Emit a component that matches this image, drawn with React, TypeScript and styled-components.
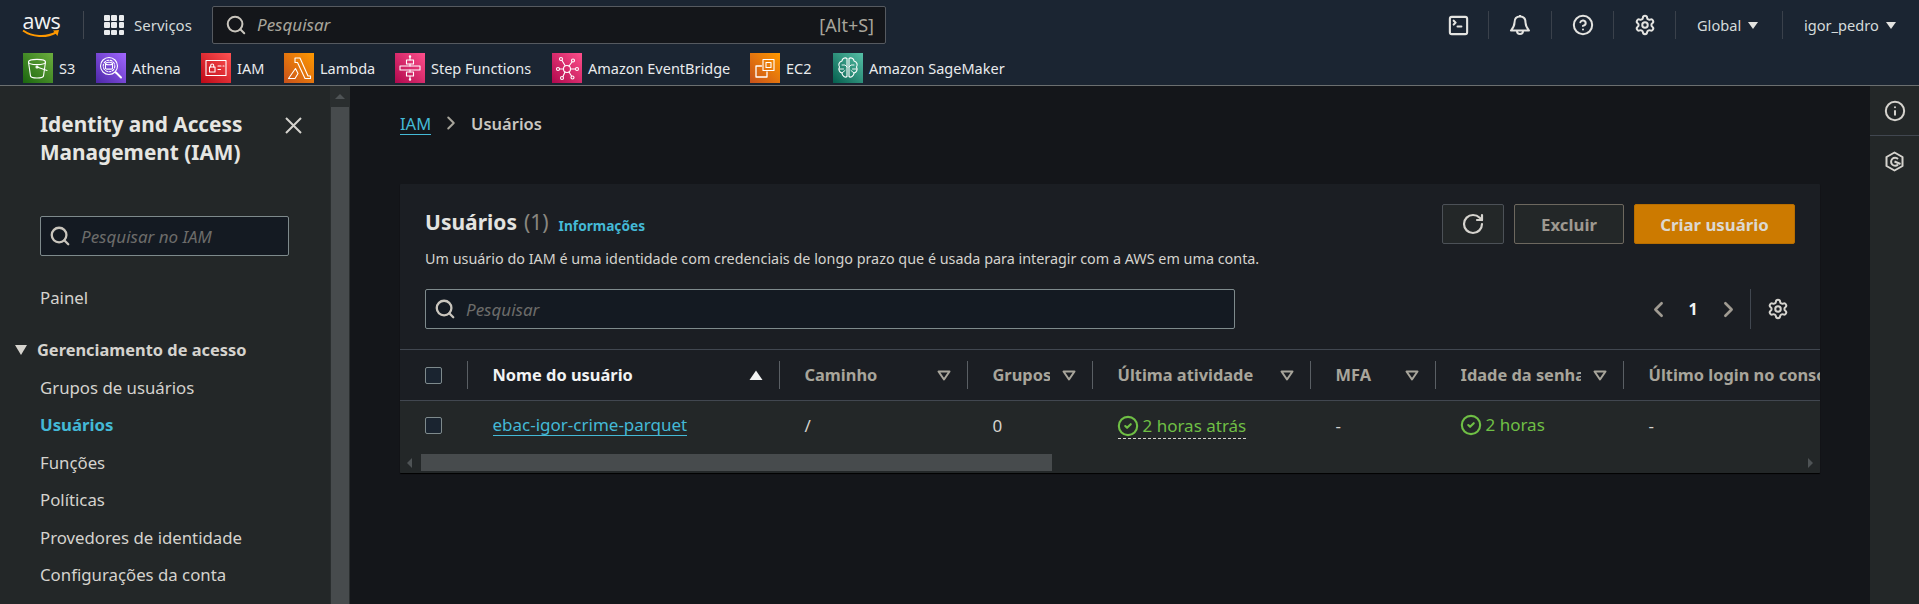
import React from "react";
import styled, { createGlobalStyle } from "styled-components";
import { Search, RotateCw, Settings, ChevronLeft, ChevronRight, CircleHelp, Info, SquareTerminal, CircleCheck } from "lucide-react";

const Global = createGlobalStyle`
  html, body { margin: 0; padding: 0; background: #14161a; }
  * { box-sizing: border-box; }
  svg { flex: none; }
  body { font-family: "Noto Sans", "Liberation Sans", sans-serif; font-size: 14px; color: #d5dbdb; }
`;

const Page = styled.div`
  width: 1919px; height: 604px; overflow: hidden; display: flex; flex-direction: column; background: #14161a;
`;
const Header = styled.header`
  height: 86px; flex: none; background: #1b2532; border-bottom: 1px solid #6b6f70; display: flex; flex-direction: column;
`;
const TopRow = styled.div`
  height: 50px; display: flex; align-items: center; padding-left: 22px;
`;
const LogoBox = styled.div`
  width: 39px; height: 26px; position: relative; flex: none; margin-top: -1px;
`;
const LogoText = styled.span`
  display: block; font-family: "Open Sans", sans-serif; font-size: 21.5px; line-height: 17px; letter-spacing: -0.3px; color: #f2f3f3; text-align: center;
`;
const LogoSmile = styled.svg`
  display: block; width: 39px; height: 10px;
`;
const TopDivider = styled.div<{ $ml: number }>`
  width: 1px; height: 28px; background: #414750; flex: none; margin-left: ${p => p.$ml}px;
`;
const ServicesBtn = styled.div`
  display: flex; align-items: center; gap: 10px; margin-left: 20px; color: #d5dbdb; font-size: 15px; width: 108px; flex: none;
`;
const GridIcon = styled.div`
  display: grid; grid-template-columns: repeat(3, 5.5px); grid-auto-rows: 5.5px; gap: 1.75px; flex: none;
  span { background: #e9ebed; border-radius: 1px; }
`;
const GlobalSearch = styled.div`
  width: 674px; height: 38px; flex: none; margin-top: -1px; background: #14161a; border: 1px solid #565a60; border-radius: 2px; display: flex; align-items: center; padding: 0 11px 0 12px; color: #c9c5bd;
`;
const GlobalPlaceholder = styled.span`
  font-style: italic; font-size: 17px; margin-left: 10px; color: #a8a59b; flex: 1;
`;
const Shortcut = styled.span`
  font-size: 18px; color: #a8a59b;
`;
const TopRight = styled.div`
  margin-left: auto; display: flex; align-items: center; height: 100%; color: #e3e3e0;
`;
const TopIcon = styled.div<{ $w: number }>`
  width: ${p => p.$w}px; display: flex; justify-content: center; flex: none;
`;
const BellIcon = styled.svg`
  width: 22px; height: 22px; display: block;
`;
const Thin = styled.div`
  width: 1px; height: 28px; background: #3a414b; flex: none;
`;
const Menu = styled.div<{ $w: number; $pl: number }>`
  width: ${p => p.$w}px; padding-left: ${p => p.$pl}px; display: flex; align-items: center; gap: 7px; font-size: 14.6px; color: #d5dbdb; flex: none;
`;
const Caret = styled.i`
  width: 0; height: 0; border-left: 5px solid transparent; border-right: 5px solid transparent; border-top: 7px solid #e3e3e0; display: block;
`;
const FavRow = styled.div`
  height: 35px; display: flex; align-items: flex-start; padding: 3px 0 0 23px;
`;
const Fav = styled.div<{ $w: number }>`
  width: ${p => p.$w}px; display: flex; align-items: center; gap: 6px; font-size: 14.5px; color: #e9ebed; flex: none; height: 30px; white-space: nowrap;
`;
const FavIcon = styled.svg`
  width: 30px; height: 30px; flex: none; display: block;
`;

const Body = styled.div`
  flex: 1; display: flex; min-height: 0;
`;
const Sidebar = styled.aside`
  width: 350px; flex: none; display: flex; background: #232728;
`;
const SideContent = styled.div`
  width: 330px; flex: none; padding: 24px 0 0 40px;
`;
const SideTitleRow = styled.div`
  display: flex; justify-content: space-between; align-items: flex-start; padding-right: 28px;
`;
const SideTitle = styled.h2`
  margin: 0; font-size: 20.8px; line-height: 28px; font-weight: 700; color: #e6e6e2; width: 230px;
`;
const CloseIcon = styled.svg`
  width: 17px; height: 17px; margin-top: 7px; flex: none; display: block;
`;
const SideSearch = styled.div`
  width: 249px; height: 40px; margin-top: 50px; background: #141a22; border: 1px solid #7e8a8c; border-radius: 2px; display: flex; align-items: center; padding-left: 8px; color: #c9c5bd;
`;
const SidePlaceholder = styled.span`
  font-style: italic; font-size: 17px; color: #6c6c6a; margin-left: 10px;
`;
const NavList = styled.nav`
  margin-top: 23px;
`;
const NavItem = styled.div<{ $active?: boolean }>`
  height: 37.5px; line-height: 37.5px; font-size: 16.8px; font-weight: ${p => (p.$active ? 700 : 400)}; color: ${p => (p.$active ? "#44b9d6" : "#d5d3ce")}; white-space: nowrap;
`;
const NavGroup = styled.div`
  height: 37.5px; margin: 14.5px 0 0 -25px; display: flex; align-items: center; gap: 10px; font-size: 16.4px; font-weight: 700; color: #d5d3ce; white-space: nowrap;
`;
const GroupCaret = styled.i`
  display: block; width: 0; height: 0; border-left: 6px solid transparent; border-right: 6px solid transparent; border-top: 10px solid #d5d3ce;
`;
const SideScroll = styled.div`
  width: 20px; flex: none; background: #2a2e2f; display: flex; flex-direction: column; align-items: center; padding-top: 8px;
`;
const UpArrow = styled.i`
  display: block; width: 0; height: 0; border-left: 5px solid transparent; border-right: 5px solid transparent; border-bottom: 5px solid #4e5355; flex: none;
`;
const SideThumb = styled.div`
  width: 18px; flex: 1; margin-top: 8px; background: #474b4d;
`;

const Main = styled.main`
  flex: 1; padding: 24px 50px 0; min-width: 0;
`;
const Crumbs = styled.div`
  height: 28px; display: flex; align-items: center; font-size: 16.5px; color: #d5dbdb; padding-bottom: 2px;
`;
const CrumbLink = styled.a`
  color: #44b9d6; border-bottom: 1px solid #44b9d6; line-height: 20px; margin-top: 3px;
`;
const CrumbSep = styled.span`
  display: flex; margin: 0 9px 0 9px; color: #a8a59b;
`;
const CrumbNow = styled.span`
  font-weight: 600; color: #c9c7c1;
`;
const Card = styled.section`
  margin-top: 46px; height: 289px; background: #1b1e23; border-radius: 1px; box-shadow: 0 1px 1px #000; overflow: hidden;
`;
const CardHead = styled.div`
  display: flex; justify-content: space-between; padding: 20px 25px 0;
`;
const TitleLine = styled.div`
  display: flex; align-items: center; height: 38px; padding-bottom: 2px;
`;
const Title = styled.h1`
  margin: 0; font-size: 21px; font-weight: 700; color: #e3e3e0;
`;
const Count = styled.span`
  font-weight: 400; color: #8a8780; margin-left: 7px;
`;
const InfoLink = styled.a`
  color: #44b9d6; font-weight: 700; font-size: 13.7px; margin-left: 10px; margin-top: 6px;
`;
const Desc = styled.p`
  margin: 7px 0 0; font-size: 14.36px; line-height: 20px; color: #d5d3ce; white-space: nowrap;
`;
const Actions = styled.div`
  display: flex; gap: 10px;
`;
const Btn = styled.button<{ $w: number; $kind: "icon" | "off" | "primary" }>`
  width: ${p => p.$w}px; height: 40px; border-radius: 2px; font: 700 16.8px "Noto Sans", sans-serif; display: flex; align-items: center; justify-content: center; padding: 0;
  background: ${p => (p.$kind === "primary" ? "#cc7a00" : "#232728")};
  color: ${p => (p.$kind === "primary" ? "#dcd8d0" : p.$kind === "off" ? "#9e9990" : "#d5d3ce")};
  border: 1px solid ${p => (p.$kind === "primary" ? "#b86e00" : p.$kind === "off" ? "#6d685f" : "#4c5157")};
`;
const FilterRow = styled.div`
  display: flex; justify-content: space-between; align-items: center; padding: 0 25px; margin-top: 20px;
`;
const FilterBox = styled.div`
  width: 810px; height: 40px; background: #141a22; border: 1px solid #7e8a8c; border-radius: 2px; display: flex; align-items: center; padding-left: 8px; color: #c9c5bd;
`;
const Pager = styled.div`
  display: flex; align-items: center; height: 40px; padding-right: 6px;
`;
const PageArrow = styled.div`
  width: 20px; display: flex; justify-content: center; color: #a09b92;
`;
const PageNum = styled.div`
  width: 20px; margin: 0 15px 0 15px; text-align: center; font-weight: 700; font-size: 16px; color: #f2f3f3;
`;
const PagerRule = styled.div`
  width: 1px; height: 40px; background: #414750; margin: 0 16px 0 12px;
`;
const GearBox = styled.div`
  display: flex; color: #d5d3ce;
`;
const TableWrap = styled.div`
  margin-top: 20px; overflow: hidden; border-top: 1px solid #414750;
`;
const cols = "68px 312px 188px 125px 218px 125px 188px 300px";
const HeadRow = styled.div`
  display: grid; grid-template-columns: ${cols}; height: 51px; border-bottom: 1px solid #414750; align-items: center; width: 1524px;
`;
const HeadCell = styled.div<{ $sorted?: boolean; $last?: boolean }>`
  height: 28px; display: flex; align-items: center; padding: 0 16px 0 24.5px; font-weight: 700; font-size: 16.4px; white-space: nowrap;
  border-right: ${p => (p.$last ? "none" : "1px solid #5a5f64")};
  color: ${p => (p.$sorted ? "#f2f3f3" : "#a8a59b")};
`;
const CheckCell = styled.div`
  padding-left: 25px; display: flex; align-items: center; height: 28px;
`;
const HeadCheckCell = styled(CheckCell)`
  border-right: 1px solid #5a5f64;
`;
const Check = styled.i`
  display: block; width: 17px; height: 17px; background: #1a2430; border: 1px solid #7e8a8c; border-radius: 2px;
`;
const Label = styled.span`
  flex: 1; overflow: hidden; min-width: 0; margin: -2px 12px 0 0;
`;
const LastLabel = styled.span`
  margin-top: -2px;
`;
const SortIcon = styled.svg`
  width: 14px; height: 11px; flex: none; display: block;
`;
const RowArea = styled.div`
  background: #232728; height: 72px; display: flex; flex-direction: column;
`;
const BodyRow = styled.div`
  display: grid; grid-template-columns: ${cols}; height: 53px; padding-bottom: 5px; align-items: center; width: 1524px; font-size: 17px; color: #d5d3ce;
`;
const BodyCell = styled.div`
  padding-left: 24.5px; white-space: nowrap; height: 100%; display: flex; align-items: center;
`;
const UserLink = styled.a`
  color: #44b9d6; border-bottom: 1px solid #44b9d6; line-height: 21px;
`;
const Status = styled.span<{ $dashed?: boolean }>`
  display: inline-flex; align-items: center; gap: 4px; color: #6fbf45; padding-bottom: 1px; line-height: 22px; margin-top: ${p => (p.$dashed ? 3 : 2)}px;
  border-bottom: ${p => (p.$dashed ? "1px dashed #d5d3ce" : "1px solid transparent")};
  svg { margin-left: -1px; }
`;
const HScroll = styled.div`
  height: 17px; display: flex; align-items: center; padding: 0 7px 0 7px;
`;
const LeftArrow = styled.i`
  display: block; width: 0; height: 0; border-top: 5px solid transparent; border-bottom: 5px solid transparent; border-right: 5px solid #4e5355; margin-right: 9px; flex: none;
`;
const RightArrow = styled.i`
  display: block; width: 0; height: 0; border-top: 5px solid transparent; border-bottom: 5px solid transparent; border-left: 5px solid #4e5355; margin-left: auto; flex: none;
`;
const HThumb = styled.div`
  width: 631px; height: 17px; background: #474b4d;
`;
const Rail = styled.aside`
  width: 49px; flex: none; background: #232728; color: #d5d3ce;
`;
const RailBtn = styled.div<{ $line?: boolean }>`
  height: 50px; display: flex; align-items: center; justify-content: center; border-bottom: ${p => (p.$line ? "1px solid #414750" : "none")};
`;
const RailIcon = styled.svg`
  width: 21px; height: 21px; display: block;
`;

const svcIcon = (id: string, a: string, b: string, children: React.ReactNode) => (
  <FavIcon viewBox="0 0 30 30">
    <defs>
      <linearGradient id={id} x1="0" y1="1" x2="1" y2="0">
        <stop offset="0" stopColor={a} />
        <stop offset="1" stopColor={b} />
      </linearGradient>
    </defs>
    <rect width="30" height="30" fill={`url(#${id})`} />
    <g fill="none" stroke="#fff" strokeWidth="1.1" strokeLinejoin="round" strokeLinecap="round">{children}</g>
  </FavIcon>
);

const favs = [
  { w: 73, t: "S3", i: svcIcon("g1", "#1b660f", "#6cae3e", <><ellipse cx="14" cy="9" rx="8.5" ry="2.6" /><path d="M5.5 9l2 14c.4 1.5 2.8 2 6.5 2s6.100-.5 6.500-2l2-14" /><circle cx="14" cy="14" r="1" /><path d="M14 14l10 3.500" /></>) },
  { w: 105, t: "Athena", i: svcIcon("g2", "#4d27a8", "#a166ff", <><circle cx="13" cy="13" r="8.500" /><circle cx="13" cy="13" r="5.800" strokeDasharray="2 1.500" /><ellipse cx="13" cy="10.500" rx="3.500" ry="1.300" /><path d="M9.500 10.500v5c0 1 7 1 7 0v-5" /><path d="M20 19.500l5 5" strokeWidth="2" /></>) },
  { w: 83, t: "IAM", i: svcIcon("g3", "#bd0816", "#ff5252", <><rect x="5" y="7.500" width="20" height="15" /><rect x="8.500" y="14" width="5.500" height="5" /><path d="M9.700 14v-1.500a1.500 1.500 0 0 1 3 0V14M17 13h3M22 13h1M17 16.500h2.500" /></>) },
  { w: 111, t: "Lambda", i: svcIcon("g4", "#c8511b", "#ff9900", <path d="M11 5h5l8 18h2.500v2.500H21L13.500 9.500H11zM11.500 15.500L14 20.500 11 25.500H4.500z" />) },
  { w: 157, t: "Step Functions", i: svcIcon("g5", "#b0084d", "#ff4f8b", <><rect x="11.500" y="7" width="7" height="4" /><rect x="5" y="13" width="20" height="4" /><rect x="11.500" y="19" width="7" height="4" /><path d="M15 3.500V7M15 11v2M15 17v2M15 23v3.500" /><circle cx="15" cy="3.500" r=".7" /><circle cx="15" cy="26.500" r=".7" /></>) },
  { w: 198, t: "Amazon EventBridge", i: svcIcon("g6", "#b0084d", "#ff4f8b", <><circle cx="15" cy="16" r="3.500" /><circle cx="9" cy="6" r="1.500" /><circle cx="21" cy="7.500" r="1.500" /><circle cx="6" cy="16" r="1.500" /><circle cx="25" cy="16" r="1.500" /><circle cx="10" cy="25" r="1.500" /><circle cx="20.500" cy="24.500" r="1.500" /><path d="M10 7.500l3 5M20 9l-3 4M7.500 16H11.500M23.500 16H18.500M11 23.500l2-4.500M19.500 23l-2.500-4" /></>) },
  { w: 83, t: "EC2", i: svcIcon("g7", "#c8511b", "#ff9900", <><rect x="13" y="6.500" width="11" height="11" /><rect x="16" y="9.500" width="5" height="5" /><path d="M11.500 13H6v11h11v-5" strokeWidth="1.300" /></>) },
  { w: 170, t: "Amazon SageMaker", i: svcIcon("g8", "#055f4e", "#56c0a7", <><path d="M14 5.500c-2-1.500-5 0-5 2.500-3 .5-4 4-2.500 6-1.500 2.500 0 5.500 2.500 6 0 3 3.500 5 5 3.500zM16 5.500c2-1.500 5 0 5 2.500 3 .5 4 4 2.500 6 1.500 2.500 0 5.500-2.500 6 0 3-3.500 5-5 3.500z" /><path d="M9 12h3l2 2M6.500 16h4M9 20l3-2.500M21 12h-3l-2 2M23.500 16h-4M21 20l-3-2.500" strokeWidth=".9" /></>) },
];

const headers = [
  { t: "Nome do usuário", sorted: true },
  { t: "Caminho" },
  { t: "Grupos" },
  { t: "Última atividade" },
  { t: "MFA" },
  { t: "Idade da senha" },
];

const Sort = ({ up }: { up?: boolean }) => (
  <SortIcon viewBox="0 0 14 11">
    {up ? <path d="M7 0.500L13.500 10H0.500z" fill="#f2f3f3" /> : <path d="M1.500 1.500h11L7 9.500z" fill="none" stroke="#a8a59b" strokeWidth="2" strokeLinejoin="round" />}
  </SortIcon>
);

export default function App() {
  return (
    <Page>
      <Global />
      <Header>
        <TopRow>
          <LogoBox>
            <LogoText>aws</LogoText>
            <LogoSmile viewBox="0 0 39 10">
              <path d="M1 1.500C10 8 24 9 34 3.500" fill="none" stroke="#f90" strokeWidth="2" />
              <path d="M31 1.500l6-.5-1.500 6z" fill="#f90" />
            </LogoSmile>
          </LogoBox>
          <TopDivider $ml={22} />
          <ServicesBtn>
            <GridIcon>{Array.from({ length: 9 }).map((_, i) => <span key={i} />)}</GridIcon>
            Serviços
          </ServicesBtn>
          <GlobalSearch>
            <Search size={22} strokeWidth={2.2} />
            <GlobalPlaceholder>Pesquisar</GlobalPlaceholder>
            <Shortcut>[Alt+S]</Shortcut>
          </GlobalSearch>
          <TopRight>
            <TopIcon $w={60}><SquareTerminal size={23} strokeWidth={2.2} /></TopIcon>
            <Thin />
            <TopIcon $w={62}>
              <BellIcon viewBox="0 0 22 22" fill="none" stroke="currentColor" strokeWidth="2" strokeLinejoin="round">
                <path d="M11 2.500c-3.500 0-5.500 2.500-5.500 6 0 3.500-1.500 5.500-3.500 8h18c-2-2.500-3.500-4.500-3.500-8 0-3.500-2-6-5.500-6z" />
                <path d="M11 1v1.500M8 17a3 3 0 0 0 6 0" />
              </BellIcon>
            </TopIcon>
            <Thin />
            <TopIcon $w={61}><CircleHelp size={22} strokeWidth={2.2} /></TopIcon>
            <Thin />
            <TopIcon $w={61}><Settings size={22} strokeWidth={2.2} /></TopIcon>
            <Thin />
            <Menu $w={106} $pl={21}>Global <Caret /></Menu>
            <Thin />
            <Menu $w={136} $pl={21}>igor_pedro <Caret /></Menu>
          </TopRight>
        </TopRow>
        <FavRow>
          {favs.map(f => (
            <Fav key={f.t} $w={f.w}>{f.i}{f.t}</Fav>
          ))}
        </FavRow>
      </Header>
      <Body>
        <Sidebar>
          <SideContent>
            <SideTitleRow>
              <SideTitle>Identity and Access Management (IAM)</SideTitle>
              <CloseIcon viewBox="0 0 17 17">
                <path d="M1 1l15 15M16 1L1 16" stroke="#d5d3ce" strokeWidth="2" fill="none" />
              </CloseIcon>
            </SideTitleRow>
            <SideSearch>
              <Search size={22} strokeWidth={2.5} />
              <SidePlaceholder>Pesquisar no IAM</SidePlaceholder>
            </SideSearch>
            <NavList>
              <NavItem>Painel</NavItem>
              <NavGroup><GroupCaret />Gerenciamento de acesso</NavGroup>
              <NavItem>Grupos de usuários</NavItem>
              <NavItem $active>Usuários</NavItem>
              <NavItem>Funções</NavItem>
              <NavItem>Políticas</NavItem>
              <NavItem>Provedores de identidade</NavItem>
              <NavItem>Configurações da conta</NavItem>
            </NavList>
          </SideContent>
          <SideScroll>
            <UpArrow />
            <SideThumb />
          </SideScroll>
        </Sidebar>
        <Main>
          <Crumbs>
            <CrumbLink>IAM</CrumbLink>
            <CrumbSep><ChevronRight size={22} strokeWidth={2.2} /></CrumbSep>
            <CrumbNow>Usuários</CrumbNow>
          </Crumbs>
          <Card>
            <CardHead>
              <div>
                <TitleLine>
                  <Title>Usuários<Count>(1)</Count></Title>
                  <InfoLink>Informações</InfoLink>
                </TitleLine>
                <Desc>Um usuário do IAM é uma identidade com credenciais de longo prazo que é usada para interagir com a AWS em uma conta.</Desc>
              </div>
              <Actions>
                <Btn $w={62} $kind="icon"><RotateCw size={24} strokeWidth={2.2} /></Btn>
                <Btn $w={110} $kind="off">Excluir</Btn>
                <Btn $w={161} $kind="primary">Criar usuário</Btn>
              </Actions>
            </CardHead>
            <FilterRow>
              <FilterBox>
                <Search size={22} strokeWidth={2.5} />
                <SidePlaceholder>Pesquisar</SidePlaceholder>
              </FilterBox>
              <Pager>
                <PageArrow><ChevronLeft size={25} strokeWidth={2.5} /></PageArrow>
                <PageNum>1</PageNum>
                <PageArrow><ChevronRight size={25} strokeWidth={2.5} /></PageArrow>
                <PagerRule />
                <GearBox><Settings size={22} strokeWidth={2.2} /></GearBox>
              </Pager>
            </FilterRow>
            <TableWrap>
              <HeadRow>
                <HeadCheckCell><Check /></HeadCheckCell>
                {headers.map(h => (
                  <HeadCell key={h.t} $sorted={h.sorted}>
                    <Label>{h.t}</Label>
                    <Sort up={h.sorted} />
                  </HeadCell>
                ))}
                <HeadCell $last><LastLabel>Último login no console</LastLabel></HeadCell>
              </HeadRow>
              <RowArea>
                <BodyRow>
                  <CheckCell><Check /></CheckCell>
                  <BodyCell><UserLink>ebac-igor-crime-parquet</UserLink></BodyCell>
                  <BodyCell>/</BodyCell>
                  <BodyCell>0</BodyCell>
                  <BodyCell><Status $dashed><CircleCheck size={22} strokeWidth={2.3} />2 horas atrás</Status></BodyCell>
                  <BodyCell>-</BodyCell>
                  <BodyCell><Status><CircleCheck size={22} strokeWidth={2.3} />2 horas</Status></BodyCell>
                  <BodyCell>-</BodyCell>
                </BodyRow>
                <HScroll>
                  <LeftArrow />
                  <HThumb />
                  <RightArrow />
                </HScroll>
              </RowArea>
            </TableWrap>
          </Card>
        </Main>
        <Rail>
          <RailBtn $line><Info size={22} strokeWidth={2.2} /></RailBtn>
          <RailBtn>
            <RailIcon viewBox="0 0 21 21" fill="none" stroke="currentColor" strokeWidth="2" strokeLinejoin="round">
              <path d="M10.500 1.500l8 4.500v9l-8 4.500-8-4.500V6z" />
              <path d="M14 8a4 4 0 1 0 0 5.500M10.500 10.500l6 2.500" />
            </RailIcon>
          </RailBtn>
        </Rail>
      </Body>
    </Page>
  );
}
